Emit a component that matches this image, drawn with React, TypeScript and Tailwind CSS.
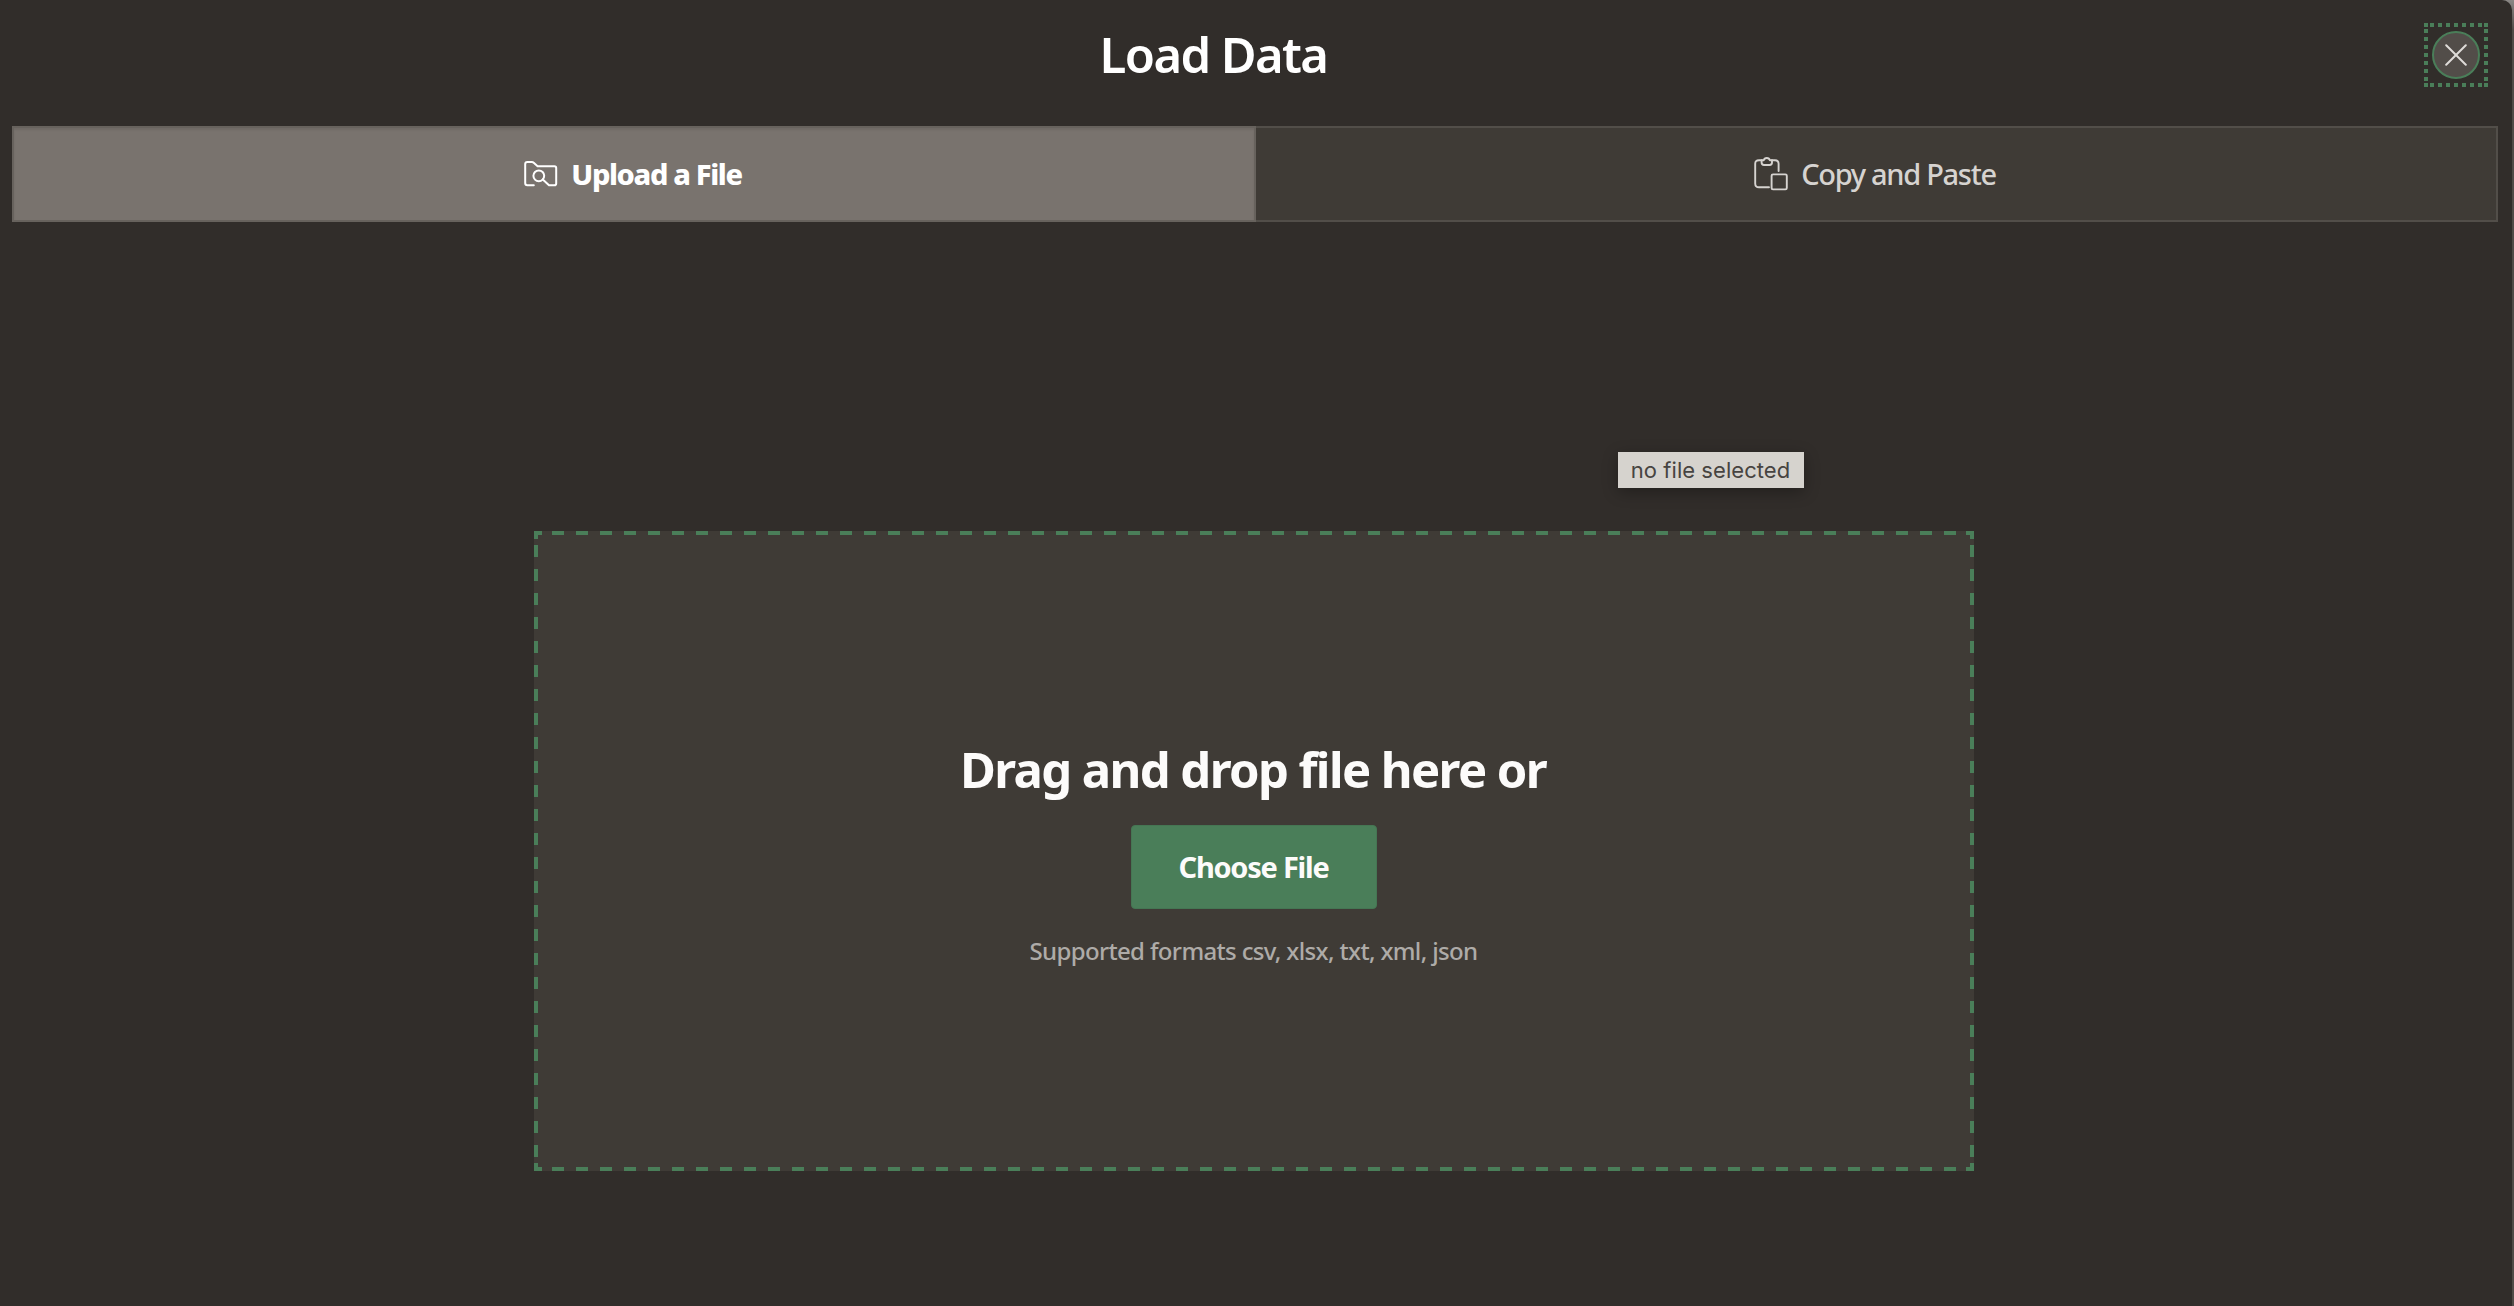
import React from "react";

const font = "font-['Noto_Sans',sans-serif]";

function FolderSearchIcon() {
  return (
    <svg className="h-[26px] w-[34px] shrink-0" viewBox="0 0 34 26" fill="none" stroke="currentColor" strokeWidth="2" strokeLinecap="round" strokeLinejoin="round">
      <path d="M9.8 24.2H3.4Q1.2 24.2 1.2 22V3Q1.2 1 3.4 1H7.8Q9 1 10 1.9L13.6 5.2H30.4Q32.2 5.2 32.2 7V22.4Q32.2 24.2 30.4 24.2H25L18.8 18.4" />
      <circle cx="14.8" cy="14.8" r="5.4" />
    </svg>
  );
}

function PasteIcon() {
  return (
    <svg className="h-[34px] w-[34px] shrink-0" viewBox="0 0 34 34" fill="none" stroke="currentColor" strokeWidth="1.9" strokeLinecap="round" strokeLinejoin="round">
      <path d="M15 30.2H5Q1.2 30.2 1.2 26.4V6.8Q1.2 3.2 5 3.2H7.6M18 3.2H21Q24.6 3.2 24.6 6.8V14" />
      <path d="M7.6 3.2H9.7Q10.3 1 12.8 1T15.9 3.2H18V5.6Q18 8 15.6 8H10Q7.6 8 7.6 5.6Z" />
      <rect x="17.6" y="17.4" width="15.2" height="15" rx="1.4" />
    </svg>
  );
}

function DashedFrame() {
  return (
    <div className="pointer-events-none absolute inset-0">
      <div className="absolute inset-x-[18px] top-0 h-1 bg-[repeating-linear-gradient(to_right,#4a7e59_0_12px,transparent_12px_24px)]" />
      <div className="absolute inset-x-[18px] bottom-0 h-1 bg-[repeating-linear-gradient(to_right,#4a7e59_0_12px,transparent_12px_24px)]" />
      <div className="absolute inset-y-[14px] left-0 w-1 bg-[repeating-linear-gradient(to_bottom,#4a7e59_0_12px,transparent_12px_24px)]" />
      <div className="absolute inset-y-[14px] right-0 w-1 bg-[repeating-linear-gradient(to_bottom,#4a7e59_0_12px,transparent_12px_24px)]" />
      <div className="absolute top-0 left-0 size-2 border-t-4 border-l-4 border-[#4a7e59]" />
      <div className="absolute top-0 right-0 size-2 border-t-4 border-r-4 border-[#4a7e59]" />
      <div className="absolute bottom-0 left-0 size-2 border-b-4 border-l-4 border-[#4a7e59]" />
      <div className="absolute right-0 bottom-0 size-2 border-r-4 border-b-4 border-[#4a7e59]" />
    </div>
  );
}

function FocusRing() {
  return (
    <div className="pointer-events-none absolute -inset-[10px]">
      <div className="absolute inset-x-[6px] top-0 h-1 bg-[repeating-linear-gradient(to_right,#4a7e59_0_4px,transparent_4px_8px)]" />
      <div className="absolute inset-x-[6px] bottom-0 h-1 bg-[repeating-linear-gradient(to_right,#4a7e59_0_4px,transparent_4px_8px)]" />
      <div className="absolute inset-y-[6px] left-0 w-1 bg-[repeating-linear-gradient(to_bottom,#4a7e59_0_4px,transparent_4px_8px)]" />
      <div className="absolute inset-y-[6px] right-0 w-1 bg-[repeating-linear-gradient(to_bottom,#4a7e59_0_4px,transparent_4px_8px)]" />
      <div className="absolute top-0 left-0 size-1 bg-[#4a7e59]" />
      <div className="absolute top-0 right-0 size-1 bg-[#4a7e59]" />
      <div className="absolute bottom-0 left-0 size-1 bg-[#4a7e59]" />
      <div className="absolute right-0 bottom-0 size-1 bg-[#4a7e59]" />
    </div>
  );
}

export default function App() {
  return (
    <div className={`h-[1306px] w-[2514px] overflow-hidden bg-[linear-gradient(to_bottom,#8a8785_0,#504b47_30px)] pr-[2px] ${font}`}>
      <main className="relative flex h-full flex-col rounded-tr-[10px] bg-[#312d2a]">
        <header className="grid h-[126px] shrink-0 grid-cols-[1fr_auto_1fr_53px] pr-8">
          <span />
          <h1 className="mt-[18px] text-[49px] leading-[72px] font-semibold tracking-[-1.6px] whitespace-nowrap text-white">Load Data</h1>
          <button aria-label="Close" className="relative col-span-2 mt-[31px] flex size-12 items-center justify-center justify-self-end rounded-full border-2 border-[#4a7e59] bg-[#524d49] text-[#dedbd8]">
            <svg className="size-[22px]" viewBox="0 0 22 22" fill="none" stroke="currentColor" strokeWidth="2" strokeLinecap="round">
              <path d="M1.2 1.2L20.8 20.8M20.8 1.2L1.2 20.8" />
            </svg>
            <FocusRing />
          </button>
        </header>
        <nav className="mr-[14px] ml-3 grid h-24 shrink-0 grid-cols-[1244px_1fr]">
          <button className="flex items-center justify-center gap-[13px] border-2 border-[#67625d] bg-[#79736e] pr-[2px] text-white shadow-[inset_0_2px_2px_rgba(0,0,0,0.08)]">
            <FolderSearchIcon />
            <span className="text-[29px] font-extrabold tracking-[-1.35px]">Upload a File</span>
          </button>
          <button className="flex items-center justify-center gap-[13px] border-2 border-l-0 border-[#524e49] bg-[#3f3b36] pr-[2px] text-[#d6d3d0]">
            <PasteIcon />
            <span className="text-[29px] font-medium tracking-[-1.3px]">Copy and Paste</span>
          </button>
        </nav>
        <section className="relative mt-[309px] ml-[534px] flex h-[640px] w-[1440px] flex-col items-center bg-[#3f3b36]">
          <DashedFrame />
          <h2 className="mt-[202px] pr-[2px] text-[49px] leading-[72px] font-bold tracking-[-1.6px] whitespace-nowrap text-[#fcfbfa]">Drag and drop file here or</h2>
          <button className="mt-[20px] flex h-[84px] w-[246px] items-center justify-center rounded-[4px] border border-[#457653] bg-[#4a7e59] pr-px text-[29px] font-bold tracking-[-1.25px] whitespace-nowrap text-[#fcfbfa]">Choose File</button>
          <p className="mt-[22px] pr-px text-[24px] leading-[40px] font-medium tracking-[-0.65px] whitespace-nowrap text-[#aeaba8]">Supported formats csv, xlsx, txt, xml, json</p>
        </section>
        <div role="tooltip" className="absolute top-[452px] left-[1618px] flex h-9 w-[186px] items-center justify-center bg-[#d6d3ce] pr-px font-['Inter',sans-serif] text-[22px] tracking-[0.05px] whitespace-nowrap text-[#474441] shadow-[0_4px_16px_rgba(0,0,0,0.3)]">no file selected</div>
      </main>
    </div>
  );
}
